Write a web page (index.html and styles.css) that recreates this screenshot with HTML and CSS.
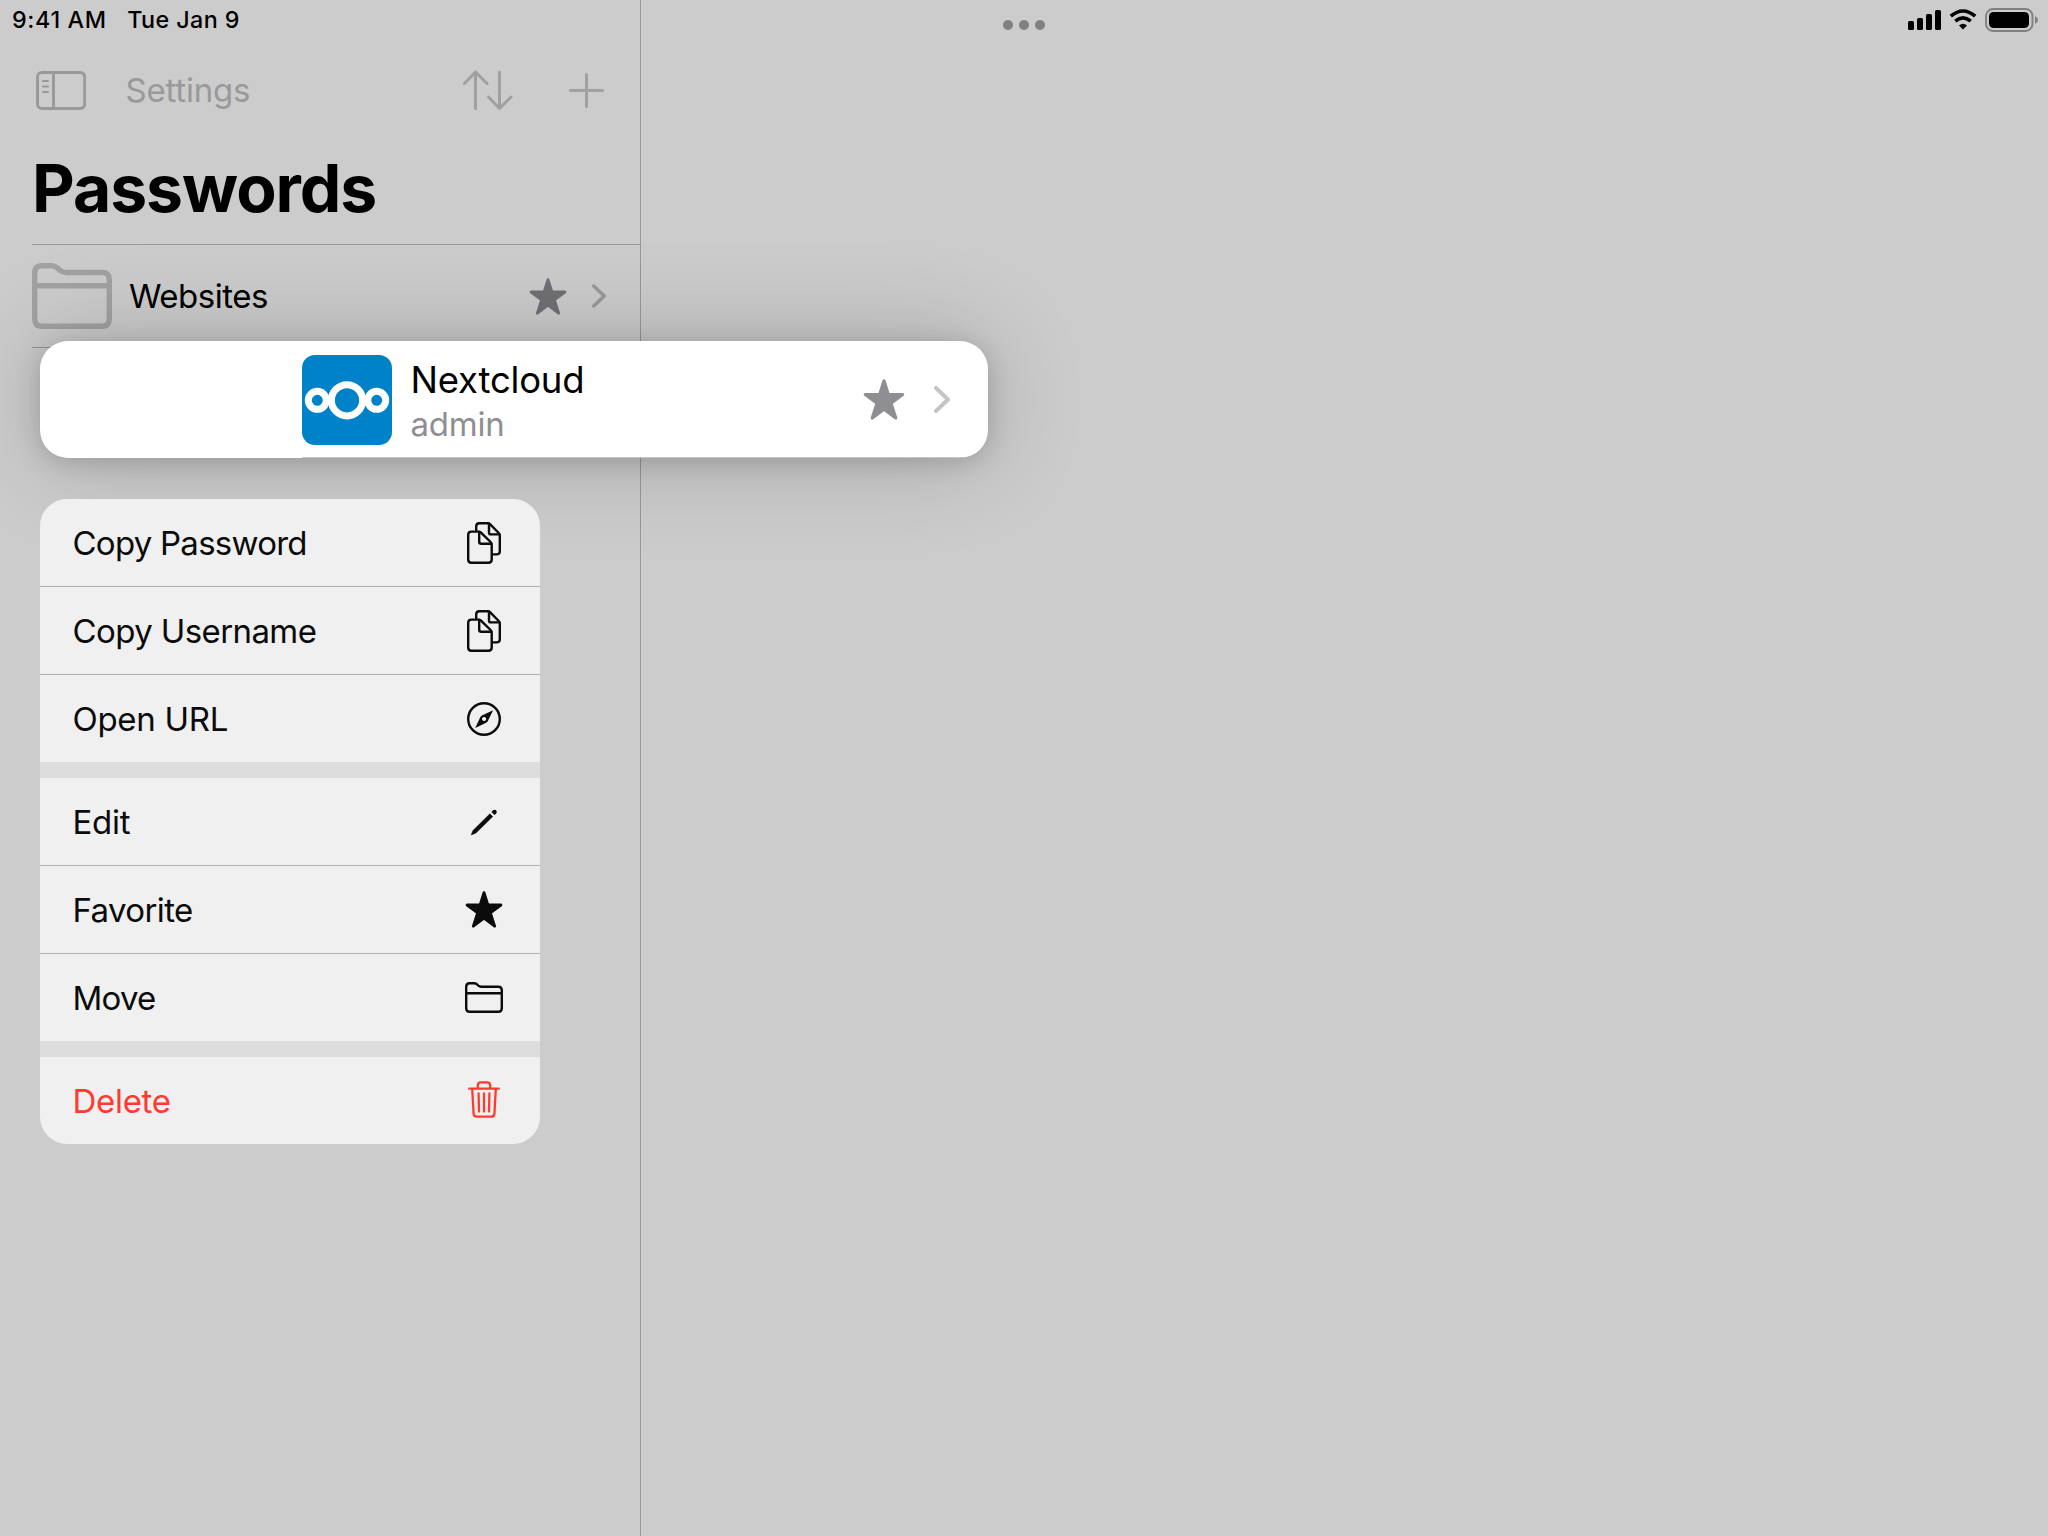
FILE: index.html
```html
<!DOCTYPE html>
<html lang="en">
<head>
<meta charset="utf-8">
<title>Passwords</title>
<link rel="stylesheet" href="styles.css">
</head>
<body>
<svg class="defs" width="0" height="0" aria-hidden="true">
  <symbol id="star" viewBox="0 0.5 40 38.8" preserveAspectRatio="none">
    <path d="M20 2.2 L24.1 15.2 L37.8 15.2 L26.7 23.4 L31.2 37.4 L20 29 L8.8 37.4 L13.3 23.4 L2.2 15.2 L15.9 15.2 Z" fill="currentColor" stroke="currentColor" stroke-width="3" stroke-linejoin="round"/>
  </symbol>
  <symbol id="chevron" viewBox="0 0 16 27">
    <path d="M2 2 L14 13.5 L2 25" fill="none" stroke="currentColor" stroke-width="4" stroke-linecap="round" stroke-linejoin="round"/>
  </symbol>
  <symbol id="docs" viewBox="0 0 34 42">
    <g fill="none" stroke="currentColor" stroke-width="2.4" stroke-linejoin="round" stroke-linecap="round">
      <path d="M9.2 8.5 V4.4 Q9.2 1.2 12.4 1.2 H20.6 Q22 1.2 23 2.2 L31.7 11 Q32.8 12.1 32.8 13.6 V29.2 Q32.8 32.4 29.6 32.4 H26.5"/>
      <path d="M22 1.6 V10.4 Q22 12.4 24 12.4 H32.4"/>
      <path d="M4.4 9.6 H11.6 Q13 9.6 14 10.6 L23.6 20 Q24.7 21.1 24.7 22.6 V37.6 Q24.7 40.8 21.5 40.8 H4.4 Q1.2 40.8 1.2 37.6 V12.8 Q1.2 9.6 4.4 9.6 Z"/>
      <path d="M12.2 10 V19.8 Q12.2 21.8 14.2 21.8 H24.2"/>
    </g>
  </symbol>
</svg>

<div class="screen">
  <header class="status">
    <div class="status-left"><span class="t time">9:41 AM</span><span class="t date">Tue Jan 9</span></div>
    <div class="dots"><i></i><i></i><i></i></div>
    <svg class="indicators" viewBox="0 0 134 24" width="134" height="24">
      <rect x="0" y="13" width="6" height="9" rx="1.6"/><rect x="9" y="10" width="6" height="12" rx="1.6"/><rect x="18" y="6" width="6" height="16" rx="1.6"/><rect x="27" y="2" width="6" height="20" rx="1.6"/>
      <path d="M42.8 8.2 Q55 -2.2 67.2 8.2" fill="none" stroke="#000" stroke-width="3.6"/>
      <path d="M47.3 13.1 Q55 6.7 62.7 13.1" fill="none" stroke="#000" stroke-width="3.6"/>
      <path d="M51 17.4 Q55 14.2 59 17.4 L55 21.6 Z"/>
      <rect x="78" y="1" width="46.5" height="22" rx="7" fill="none" stroke="#808080" stroke-width="1.9"/>
      <rect x="81" y="4" width="40" height="16" rx="4.5"/>
      <path d="M127 8 Q130 9.5 130 12 Q130 14.5 127 16 Z" fill="#808080"/>
    </svg>
  </header>

  <aside class="sidebar">
    <nav class="toolbar">
      <svg class="panel" viewBox="0 0 50 39" width="50" height="39" fill="none" stroke="#999" stroke-width="2.9" stroke-linecap="round">
        <rect x="1.5" y="1.5" width="47.2" height="36" rx="4.5"/>
        <path d="M17.5 1.5 V37.5"/><path stroke-width="2" d="M7 10 H12 M7 15.4 H12 M7 21 H12"/>
      </svg>
      <span class="t settings">Settings</span>
      <svg class="sort" viewBox="0 0 50 41" width="50" height="41" fill="none" stroke="#a0a0a0" stroke-width="3" stroke-linecap="round" stroke-linejoin="round">
        <path d="M12.5 2 V38.5 M1.5 13.5 L12.5 2 L24 13.5"/><path d="M36.5 2 V38.5 M25.5 27 L36.5 38.5 L48 27"/>
      </svg>
      <svg class="plus" viewBox="0 0 35 35" width="35" height="35" stroke="#a0a0a0" stroke-width="3" stroke-linecap="round">
        <path d="M17.5 1.5 V33.5 M1.5 17.5 H33.5"/>
      </svg>
    </nav>
    <h1 class="title"><span class="t">Passwords</span></h1>
    <div class="row">
      <svg class="big-folder" viewBox="0 0 80 66" width="80" height="66" fill="none" stroke="#a2a2a2" stroke-width="5.4" stroke-linejoin="round">
        <path d="M2.7 10 Q2.7 2.7 9.5 2.7 H19.5 Q23 2.7 25.5 5 L28 7.3 Q30.5 9.5 34 9.5 H70 Q77.3 9.5 77.3 16.5 V56 Q77.3 63.3 70 63.3 H10 Q2.7 63.3 2.7 56 Z"/><path d="M3 22.7 H77"/>
      </svg>
      <span class="t websites">Websites</span>
      <svg class="row-star"><use href="#star"/></svg>
      <svg class="row-chevron"><use href="#chevron"/></svg>
    </div>
  </aside>

  <section class="preview">
    <svg class="logo" viewBox="0 0 90 90" width="90" height="90">
      <rect width="90" height="90" rx="13" fill="#0082c9"/>
      <g fill="none" stroke="#fff"><circle cx="45" cy="45.3" r="15.6" stroke-width="7"/><circle cx="15.3" cy="45.3" r="9" stroke-width="7"/><circle cx="74.7" cy="45.3" r="9" stroke-width="7"/></g>
    </svg>
    <div class="account"><span class="t name">Nextcloud</span><span class="t user">admin</span></div>
    <svg class="card-star"><use href="#star"/></svg>
    <svg class="card-chevron"><use href="#chevron"/></svg>
  </section>

  <ul class="menu">
    <li><span class="t tight">Copy Password</span><svg width="34" height="42"><use href="#docs"/></svg></li>
    <li><span class="t snug">Copy Username</span><svg width="34" height="42"><use href="#docs"/></svg></li>
    <li><span class="t">Open URL</span>
      <svg width="34" height="34" viewBox="0 0 34 34"><circle cx="17" cy="17" r="15.8" fill="none" stroke="currentColor" stroke-width="2.4"/><path fill-rule="evenodd" fill="currentColor" d="M26.1 8.2 L20.6 19.4 L19.2 20.8 L8.2 26 L13.5 14.8 L14.9 13.4 Z M17.1 14.9 A2.1 2.1 0 1 0 17.11 14.9 Z"/></svg></li>
    <li class="group"><span class="t">Edit</span>
      <svg width="28" height="28" viewBox="0 0 28 28" fill="currentColor"><path d="M1.2 27 L3 22.4 L19.9 5.8 L22.8 8.6 L6 25 Z" stroke="currentColor" stroke-width=".5" stroke-linejoin="round"/><path d="M21.4 3.9 L23 2.3 Q24.3 1.2 25.7 2 L26.4 2.7 Q27.3 4 26.3 5.3 L24.5 7 Z"/></svg></li>
    <li><span class="t snug">Favorite</span><svg width="38" height="37"><use href="#star"/></svg></li>
    <li><span class="t tight">Move</span>
      <svg width="38" height="31" viewBox="0 0 38 31" fill="none" stroke="currentColor" stroke-width="2.4" stroke-linejoin="round"><path d="M1.2 4.9 Q1.2 1.3 4.6 1.3 H9 Q10.7 1.3 12 2.4 L13.3 3.6 Q14.6 4.7 16.3 4.7 H33.4 Q36.8 4.7 36.8 8.2 V26.3 Q36.8 29.8 33.4 29.8 H4.6 Q1.2 29.8 1.2 26.3 Z M1.3 11.3 H36.7"/></svg></li>
    <li class="group danger"><span class="t">Delete</span>
      <svg width="32" height="37" viewBox="0 0 32 37" fill="none" stroke="currentColor" stroke-width="2.3" stroke-linecap="round" stroke-linejoin="round"><path d="M1.2 7.7 H30.8 M4.2 8 L5.6 32.8 Q5.8 35.7 8.7 35.7 H23.3 Q26.2 35.7 26.4 32.8 L27.8 8 M9.8 7.5 V4.5 Q9.8 1.3 13 1.3 H19 Q22.2 1.3 22.2 4.5 V7.5 M10.6 12.5 L11 30.5 M16 12.5 V30.5 M21.4 12.5 L21 30.5"/></svg></li>
  </ul>
</div>
</body>
</html>
```
FILE: styles.css
```css
* { box-sizing: border-box; }
body { margin: 0; background: #ccc; font-family: Inter, "Liberation Sans", sans-serif; color: #000; }
svg { display: block; flex: none; }
.defs { position: absolute; }
.t { white-space: nowrap; }
.screen { position: relative; width: 2048px; height: 1536px; overflow: hidden; background: #ccc; }

.status { position: absolute; inset: 0 0 auto 0; height: 40px; display: flex; justify-content: space-between; font-size: 23.3px; font-weight: 500; }
.status-left { display: flex; gap: 20.5px; padding-left: 12px; line-height: 39px; width: 996px; }
.time { letter-spacing: .66px; }
.date { letter-spacing: .4px; }
.dots { display: flex; gap: 6px; padding-top: 20px; margin-right: auto; padding-left: 7px; }
.dots i { width: 10px; height: 10px; border-radius: 50%; background: #808080; }
.indicators { margin: 8px 6px 0 0; }

.sidebar { width: 641px; height: 1536px; border-right: 1px solid #999; padding-top: 56px; }
.toolbar { display: flex; align-items: center; height: 68px; padding: 1px 36px 0; font-size: 33px; color: #999; }
.settings { margin-left: 39.5px; padding-bottom: 2px; letter-spacing: -.2px; }
.sort { margin-left: auto; }
.plus { margin-left: 56px; }
.title { margin: 0; height: 120px; padding: 24px 0 0 32px; font-size: 66px; line-height: 80px; font-weight: 700; letter-spacing: -1.05px; }
.row { display: flex; align-items: center; height: 104px; margin-left: 32px; padding-right: 34px; border: solid #999; border-width: 1px 0; font-size: 33px; }
.websites { margin-left: 17px; letter-spacing: -.5px; }
.row-star { width: 38px; height: 37px; margin-left: auto; color: #707075; }
.row-chevron { width: 14px; height: 24px; margin-left: 25px; color: #9a9a9a; }

.preview { position: absolute; left: 40px; top: 341px; width: 948px; height: 117px; border-radius: 28px; display: flex; align-items: center; padding: 0 38px 0 262px; background: linear-gradient(#c6c6c8, #c6c6c8) 262px 116px / 686px 1px no-repeat, #fff; box-shadow: 0 0 100px rgba(0,0,0,.2), 0 4px 24px rgba(0,0,0,.16); }
.account { display: flex; flex-direction: column; margin: 2px 0 0 18.5px; }
.name { font-size: 36.5px; line-height: 46px; letter-spacing: -.2px; }
.user { font-size: 33px; line-height: 42px; letter-spacing: -.2px; color: #8e8e93; }
.card-star { width: 42px; height: 41px; margin-left: auto; color: #8e8e93; }
.card-chevron { width: 16px; height: 27px; margin-left: 29px; color: #c4c4c6; }

.menu { position: absolute; left: 40px; top: 499px; width: 500px; margin: 0; padding: 0; list-style: none; border-radius: 27px; overflow: hidden; background: #f0f0f0; color: #0b0b0b; font-size: 33px; letter-spacing: -.3px; }
.menu li { display: flex; align-items: center; height: 88px; padding-left: 32.5px; border-top: 1px solid #b0b0b0; }
.menu li:first-child { height: 87px; border-top: 0; }
.menu li.group { height: 103px; border-top: 16px solid #ddd; }
.menu svg { margin: 0 56px 0 auto; transform: translateX(50%); }
.tight { letter-spacing: -.75px; }
.snug { letter-spacing: -.6px; }
.menu li.danger { color: #ff3b30; }
.danger svg { margin-bottom: 2px; }
```
